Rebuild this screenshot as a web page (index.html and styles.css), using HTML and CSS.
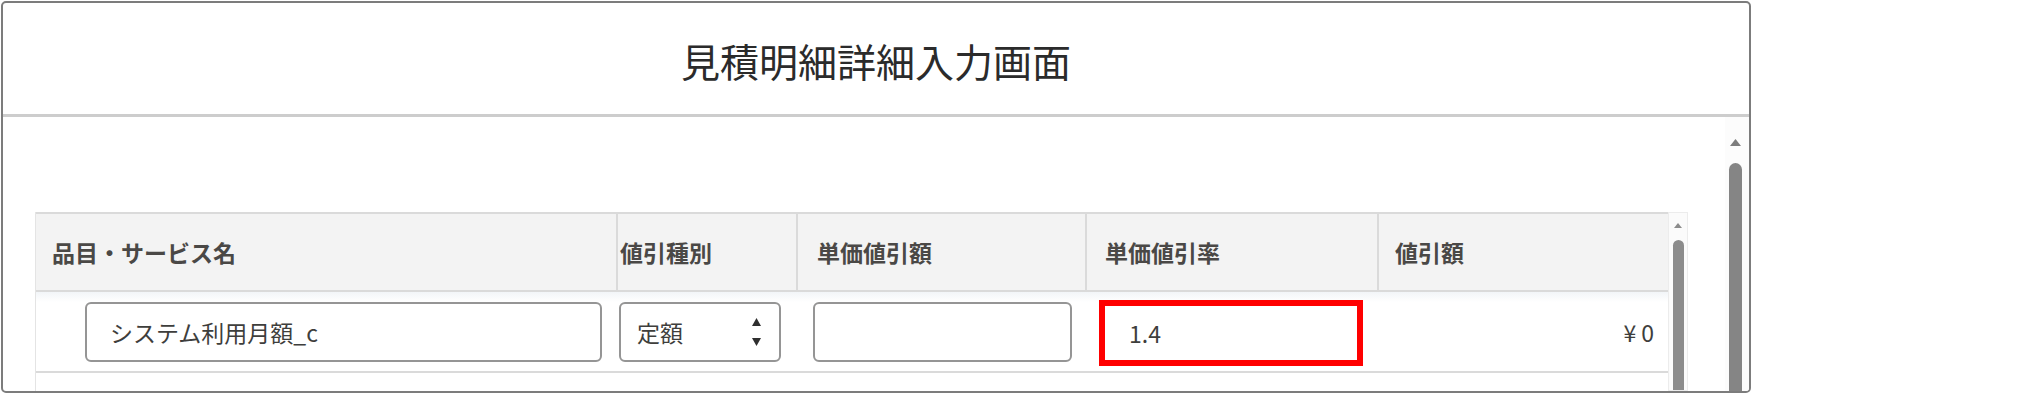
FILE: index.html
```html
<!DOCTYPE html>
<html lang="ja">
<head>
<meta charset="utf-8">
<title>見積明細詳細入力画面</title>
<link rel="stylesheet" href="styles.css">
</head>
<body>
<div class="frame">
  <header class="frame-head">
    <h1>見積明細詳細入力画面</h1>
  </header>
  <div class="frame-body">
    <div class="content">
      <div class="grid-wrap">
        <div class="grid">
          <div class="th th1">品目・サービス名</div>
          <div class="th th2">値引種別</div>
          <div class="th th3">単価値引額</div>
          <div class="th th4">単価値引率</div>
          <div class="th th5">値引額</div>

          <div class="td td1"><input class="field" type="text" value="システム利用月額_c"></div>
          <div class="td td2">
            <div class="select">
              <span>定額</span>
              <svg class="updown" width="9" height="28" viewBox="0 0 9 28"><path d="M4.5 0 L9 8 L0 8 Z" fill="#2f2f2f"/><path d="M0 20 L9 20 L4.5 28 Z" fill="#2f2f2f"/></svg>
            </div>
          </div>
          <div class="td td3"><input class="field" type="text" value=""></div>
          <div class="td td4"><input class="field rate" type="text" value="1.4"></div>
          <div class="td td5"><span class="yen">¥</span>0</div>
        </div>
        <div class="inner-scroll">
          <svg width="8" height="5" viewBox="0 0 8 5"><path d="M4 0 L8 5 L0 5 Z" fill="#8c8c8c"/></svg>
          <div class="thumb"></div>
        </div>
      </div>
    </div>
    <div class="page-scroll">
      <svg width="11" height="7" viewBox="0 0 11 7"><path d="M5.5 0 L11 7 L0 7 Z" fill="#7d7d7d"/></svg>
      <div class="thumb big"></div>
    </div>
  </div>
</div>
</body>
</html>
```

FILE: styles.css
```css
* { box-sizing: border-box; }

body {
  margin: 0;
  background: #fff;
  font-family: "Noto Sans CJK JP", "Noto Sans", sans-serif;
  color: #3e3e3c;
}

.frame {
  margin: 1px 0 0 1px;
  width: 1750px;
  height: 392px;
  border: 2px solid #7c7c7c;
  border-radius: 5px;
  display: flex;
  flex-direction: column;
  overflow: hidden;
  background: #fff;
}

.frame-head {
  height: 114px;
  flex: none;
  border-bottom: 3px solid #cdcdcd;
  display: flex;
  align-items: center;
  justify-content: center;
  padding-top: 4px;
}

.frame-head h1 {
  margin: 0;
  font-size: 39px;
  font-weight: 400;
  line-height: 1;
  color: #2b2b2b;
}

.frame-body {
  flex: 1;
  display: flex;
  min-height: 0;
}

.content {
  flex: 1;
  padding: 95px 0 0 32px;
  overflow: hidden;
}

.grid-wrap {
  display: flex;
  width: 1653px;
  height: 100%;
}

.grid {
  width: 1633px;
  flex: none;
  display: grid;
  grid-template-columns: 580px 180px 289px 292px 291px;
  grid-template-rows: 80px 81px;
  align-content: start;
  border-left: 1px solid #e4e4e4;
}

.th {
  background: #f3f3f3;
  border-top: 2px solid #dadada;
  border-bottom: 2px solid #dadada;
  display: flex;
  align-items: center;
  font-size: 23px;
  font-weight: 700;
  color: #4a4846;
  white-space: nowrap;
}

.th + .th { border-left: 2px solid #dadada; }

.th1 { padding-left: 16px; }
.th2 { padding-left: 2px; }
.th3 { padding-left: 19px; }
.th4 { padding-left: 18px; }
.th5 { padding-left: 16px; }

.td {
  border-bottom: 2px solid #dadada;
  display: flex;
  align-items: flex-start;
  padding-top: 10px;
  background: linear-gradient(#f2f5f8, #fff 10px);
  font-size: 23px;
}

.td1 { padding-left: 49px; padding-right: 14px; }
.td2 { padding-left: 3px; padding-right: 15px; }
.td3 { padding-left: 17px; padding-right: 13px; }
.td4 { padding-left: 14px; padding-right: 14px; }
.td5 {
  padding: 0 14px 0 0;
  align-items: center;
  justify-content: flex-end;
  color: #3e3e3c;
}

.yen { margin-right: 5px; }

.field {
  width: 100%;
  height: 60px;
  border: 2px solid #959595;
  border-radius: 6px;
  padding: 0 0 0 23px;
  font-family: inherit;
  font-size: 23px;
  color: #3e3e3c;
  background: #fff;
  outline: none;
}

.field.rate {
  height: 66px;
  margin-top: -2px;
  border: 6px solid #ff0000;
  border-radius: 0;
  padding-left: 24px;
}

.select {
  width: 100%;
  height: 60px;
  border: 2px solid #959595;
  border-radius: 6px;
  display: flex;
  align-items: center;
  justify-content: space-between;
  padding: 0 18px 0 16px;
  background: #fff;
}

.inner-scroll {
  width: 20px;
  flex: none;
  border: 1px solid #ececec;
  background: #fbfbfb;
  display: flex;
  flex-direction: column;
  align-items: center;
  padding-top: 10px;
  gap: 12px;
}

.thumb {
  flex: 1;
  width: 11px;
  background: #8c8c8c;
  border-radius: 6px 6px 0 0;
}

.page-scroll {
  width: 24px;
  flex: none;
  display: flex;
  flex-direction: column;
  align-items: center;
  padding: 22px 4px 0 0;
  gap: 17px;
  background: #fcfcfc;
}

.thumb.big {
  width: 13px;
  background: #858585;
  border-radius: 7px 7px 0 0;
}
```
